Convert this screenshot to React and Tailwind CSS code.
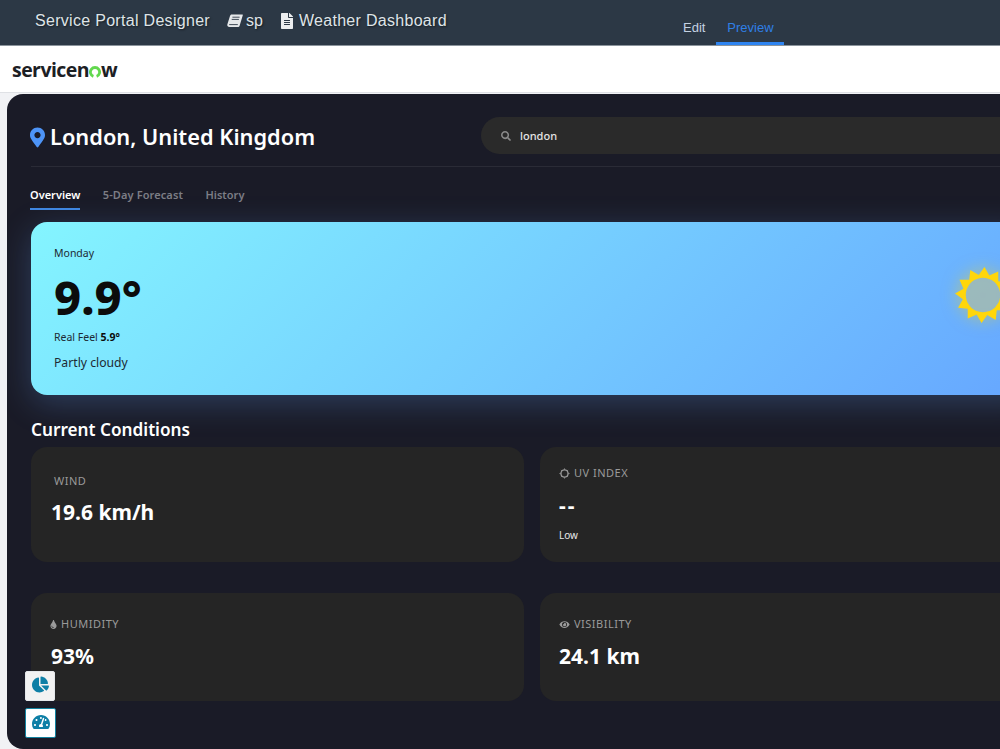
import { FaFileAlt, FaMapMarkerAlt, FaSearch, FaTint, FaEye, FaChartPie, FaTachometerAlt } from 'react-icons/fa';

const uiFont = "font-['Noto_Sans','Open_Sans',sans-serif]";

function BookIcon() {
  // slanted closed book, spine on the lower left
  return (
    <svg viewBox="0 0 16 14" className="ml-[17px] h-[14px] w-[16px]" fill="#e6e8ea">
      <path d="M4.6 0.4h10.6c0.5 0 0.8 0.4 0.6 0.9L12.7 11.4c-0.3 1-1 1.6-2 1.6H2.4C1 13 0 12 0.3 10.5L3 2c0.3-1 0.8-1.6 1.6-1.6Z" />
      <path d="M5.4 3.2h7.2M4.7 5.4h7.2M2.2 10.6h8.6" stroke="#2c3845" strokeWidth="0.9" fill="none" />
    </svg>
  );
}

function LogoO() {
  // green ring of the logo, open at the bottom
  return (
    <svg viewBox="0 0 12 12" className="mt-[3px] h-[12px] w-[12px]" fill="none">
      <path d="M4.4 10.4A4.6 4.6 0 1 1 7.6 10.4" stroke="#62d84e" strokeWidth="2.8" />
    </svg>
  );
}

function SunIcon() {
  // 12 point star with a faint centre
  const points = [];
  for (let i = 0; i < 24; i++) {
    const r = i % 2 === 0 ? 28 : 20.5;
    const a = ((i * 15 + 3) * Math.PI) / 180;
    points.push(`${30 + r * Math.cos(a)},${30 + r * Math.sin(a)}`);
  }
  return (
    <svg viewBox="0 0 60 60" className="mt-[43px] h-[60px] w-[60px] shrink-0 self-start drop-shadow-[0_0_8px_rgba(255,215,0,0.5)]">
      <circle cx="30" cy="30" r="17.5" fill="#9db8c4" fillOpacity="0.6" />
      <path
        fillRule="evenodd"
        fill="#ffd60a"
        d={`M${points.join('L')}Z M30 12.8a17.2 17.2 0 1 0 0.01 0Z`}
      />
    </svg>
  );
}

function UvIcon() {
  return (
    <svg viewBox="0 0 12 12" className="h-[11px] w-[11px]" fill="none" stroke="currentColor">
      <circle cx="6" cy="6" r="3.9" strokeWidth="1.5" />
      <path strokeWidth="1" d="M6 0.5v1.2M6 10.3v1.2M0.5 6h1.2M10.3 6h1.2M2.1 2.1l0.9 0.9M9 9l0.9 0.9M2.1 9.9l0.9-0.9M9 3l0.9-0.9" />
    </svg>
  );
}

function Card({ icon, label, value, note, className, valueClass }) {
  return (
    <div className={`rounded-2xl bg-[#252525] ${className}`}>
      <div className="flex h-[14px] items-center gap-[4px] text-[11px] tracking-[0.5px] text-[#9a9a9a]">
        {icon}
        <span>{label}</span>
      </div>
      <div className={`font-bold text-white ${valueClass}`}>{value}</div>
      {note && <div className="mt-[9px] text-[10px] leading-[14px] text-[#e8e8e8]">{note}</div>}
    </div>
  );
}

export default function App() {
  return (
    <div className="flex h-[749px] w-[1000px] flex-col overflow-hidden bg-[#f1f2f5]">
      <header className="flex h-[46px] shrink-0 border-b border-[#8b949c] bg-[#2c3845] font-['Liberation_Sans',sans-serif] text-[#dfe4e8]">
        <div className="flex h-[42px] w-[671px] items-center pl-[35px] text-[16px] [text-shadow:1px_1px_2px_rgba(0,0,0,0.5)]">
          <span className="tracking-[0.3px]">Service Portal Designer</span>
          <BookIcon />
          <span className="ml-[3px]">sp</span>
          <FaFileAlt className="ml-[17px] h-[16px] w-[14px] text-[#eceeef]" />
          <span className="ml-[5px] tracking-[0.3px]">Weather Dashboard</span>
        </div>
        <nav className="flex items-stretch text-[13px]">
          <a className="flex items-end px-[12px] pb-[8px] text-[#c4d2e2]">Edit</a>
          <a className="ml-[-1px] flex w-[68px] items-end justify-center border-b-[3px] border-[#2e84f0] pb-[5px] text-[#2f7fe6]">Preview</a>
        </nav>
      </header>

      <div className="flex h-[47px] shrink-0 items-center border-b border-[#dfe1e5] bg-white pl-[12px] pt-[2px]">
        <span className="flex items-center font-['Open_Sans',sans-serif] text-[19.5px] font-bold leading-none tracking-[-0.55px] text-[#1c2024]">
          servicen
          <LogoO />
          w
        </span>
      </div>

      <main className={`relative mt-[1px] ml-[7px] min-h-0 w-[1050px] flex-1 rounded-l-2xl bg-[#1a1b27] px-[24px] ${uiFont}`}>
        <div className="flex h-[73px] items-start border-b border-[#2a2b36] pt-[23px]">
          <div className="-ml-[1px] mt-[5px] flex w-[451px] items-center gap-[5px]">
            <FaMapMarkerAlt className="h-[21px] w-[15px] text-[#4d94f7]" />
            <h1 className="text-[21.8px] font-semibold leading-[30px] text-white">London, United Kingdom</h1>
          </div>
          <div className="flex h-[37px] flex-1 items-center gap-[9px] rounded-full bg-[#2a2a2a] pl-[20px] pt-[1px] text-[11px] font-medium text-[#e4e4e4]">
            <FaSearch className="h-[10px] w-[10px] text-[#8a8a8a]" />
            <span>london</span>
          </div>
        </div>

        <div className="-ml-[1px] mt-[12px] flex h-[31px] gap-[22.5px] text-[11px] font-semibold">
          <span className="h-[31px] border-b-2 border-[#3f86e0] pt-[8px] text-white">Overview</span>
          <span className="pt-[8px] tracking-[0.1px] text-[#7c7d85]">5-Day Forecast</span>
          <span className="pt-[8px] text-[#7c7d85]">History</span>
        </div>

        <section className="mt-[12px] flex h-[173px] items-center justify-between rounded-2xl bg-[linear-gradient(135deg,#84f5ff_0%,#66a6ff_100%)] pl-[23px] pr-[20px] shadow-[0_8px_32px_rgba(102,166,255,0.25)]">
          <div className="text-[#1d2a33]">
            <div className="text-[10.5px] leading-[14px]">Monday</div>
            <div className="mt-[9px] text-[47px] font-extrabold leading-[56px] text-[#0c0c0c]">9.9°</div>
            <div className="mt-[5px] text-[10.5px] leading-[14px]">
              Real Feel <strong className="text-[#0c0c0c]">5.9°</strong>
            </div>
            <div className="mt-[10px] text-[12.2px] leading-[18px]">Partly cloudy</div>
          </div>
          <SunIcon />
        </section>

        <h2 className="mt-[23px] text-[17.2px] font-semibold leading-[24px] text-white">Current Conditions</h2>

        <div className="mt-[5px] grid grid-cols-2 gap-x-[16px] gap-y-[31px]">
          <Card
            label="WIND"
            value="19.6 km/h"
            className="h-[115px] pl-[23px] pt-[27px]"
            valueClass="mt-[10px] text-[21px] leading-[28px] -ml-[3px]"
          />
          <Card
            icon={<UvIcon />}
            label="UV INDEX"
            value="--"
            note="Low"
            className="h-[115px] pl-[19px] pt-[19px]"
            valueClass="mt-[11px] text-[21px] leading-[28px] tracking-[2px]"
          />
          <Card
            icon={<FaTint className="h-[9px] w-[7px]" />}
            label="HUMIDITY"
            value="93%"
            className="h-[108px] pl-[19px] pt-[24px]"
            valueClass="mt-[11px] ml-[1px] text-[21px] leading-[28px]"
          />
          <Card
            icon={<FaEye className="h-[9px] w-[11px]" />}
            label="VISIBILITY"
            value="24.1 km"
            className="h-[108px] pl-[19px] pt-[24px]"
            valueClass="mt-[11px] text-[21px] leading-[28px]"
          />
        </div>

        <div className="absolute left-[18px] top-[577px] flex flex-col gap-[7px]">
          <button className="flex h-[30px] w-[30px] items-center justify-center rounded-[2px] border border-[#e4e7ea] bg-[#f2f2f2] pb-[3px]">
            <FaChartPie className="h-[17px] w-[17px] text-[#0e7fa6]" />
          </button>
          <button className="flex h-[30px] w-[31px] items-center justify-center rounded-[2px] border border-[#12829f] bg-white pb-[2px]">
            <FaTachometerAlt className="h-[18px] w-[18px] text-[#0e7fa6]" />
          </button>
        </div>
      </main>
    </div>
  );
}
